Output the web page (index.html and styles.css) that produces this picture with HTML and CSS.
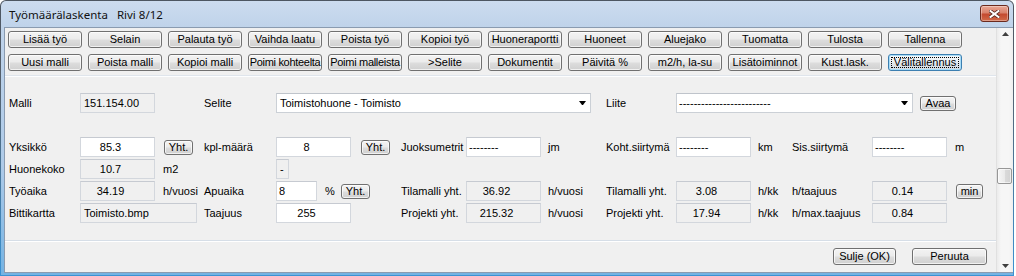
FILE: index.html
```html
<!DOCTYPE html>
<html lang="fi">
<head>
<meta charset="utf-8">
<title>Työmäärälaskenta</title>
<link rel="stylesheet" href="styles.css">
</head>
<body>
<div class="window">
  <div class="frame">
    <div class="titlebar">
      <span class="title">Työmäärälaskenta</span><span class="title rivi">Rivi 8/12</span>
      <button class="close" aria-label="Sulje">
        <svg width="11" height="8" viewBox="0 0 11 8"><path d="M1.5 1 L9.5 7 M9.5 1 L1.5 7" stroke="#5a2b22" stroke-width="3.6" stroke-linecap="square" fill="none"/><path d="M1.5 1 L9.5 7 M9.5 1 L1.5 7" stroke="#ffffff" stroke-width="2" stroke-linecap="square" fill="none"/></svg>
      </button>
    </div>
    <div class="client">
      <div class="main">
        <div class="toolbar">
          <div class="btnrow">
            <button class="btn">Lisää työ</button>
            <button class="btn">Selain</button>
            <button class="btn">Palauta työ</button>
            <button class="btn">Vaihda laatu</button>
            <button class="btn">Poista työ</button>
            <button class="btn">Kopioi työ</button>
            <button class="btn">Huoneraportti</button>
            <button class="btn">Huoneet</button>
            <button class="btn">Aluejako</button>
            <button class="btn">Tuomatta</button>
            <button class="btn">Tulosta</button>
            <button class="btn">Tallenna</button>
          </div>
          <div class="btnrow">
            <button class="btn">Uusi malli</button>
            <button class="btn">Poista malli</button>
            <button class="btn">Kopioi malli</button>
            <button class="btn tight">Poimi kohteelta</button>
            <button class="btn tight">Poimi malleista</button>
            <button class="btn">&gt;Selite</button>
            <button class="btn">Dokumentit</button>
            <button class="btn">Päivitä %</button>
            <button class="btn">m2/h, la-su</button>
            <button class="btn">Lisätoiminnot</button>
            <button class="btn">Kust.lask.</button>
            <button class="btn focus">Välitallennus</button>
          </div>
        </div>

        <div class="form">
          <span class="lbl c1">Malli</span>
          <span class="fld ro">151.154.00</span>
          <span class="lbl c4">Selite</span>
          <div class="combo selite"><span>Toimistohuone - Toimisto</span><i class="arrow"></i></div>
          <span class="lbl">Liite</span>
          <div class="cell liite-cell"><div class="combo liite"><span>-------------------------</span><i class="arrow"></i></div><button class="sbtn avaa">Avaa</button></div>

          <div class="blank"></div>

          <span class="lbl c1">Yksikkö</span>
          <span class="fld ctr">85.3</span>
          <button class="sbtn yht nudge">Yht.</button>
          <span class="lbl">kpl-määrä</span>
          <div class="cell"><span class="fld ctr">8</span><button class="sbtn yht after-fld">Yht.</button></div>
          <span class="lbl">Juoksumetrit</span>
          <span class="fld">--------</span>
          <span class="lbl">jm</span>
          <span class="lbl">Koht.siirtymä</span>
          <span class="fld">--------</span>
          <span class="lbl">km</span>
          <span class="lbl">Sis.siirtymä</span>
          <span class="fld">--------</span>
          <span class="lbl">m</span>

          <span class="lbl c1">Huonekoko</span>
          <span class="fld ro ctr">10.7</span>
          <span class="lbl">m2</span>
          <span class="fld ro mini c5">-</span>

          <span class="lbl c1">Työaika</span>
          <span class="fld ro ctr">34.19</span>
          <span class="lbl">h/vuosi</span>
          <span class="lbl">Apuaika</span>
          <div class="cell"><span class="fld short">8</span><span class="pct">%</span><button class="sbtn yht">Yht.</button></div>
          <span class="lbl">Tilamalli yht.</span>
          <span class="fld ro ctr">36.92</span>
          <span class="lbl">h/vuosi</span>
          <span class="lbl">Tilamalli yht.</span>
          <span class="fld ro ctr">3.08</span>
          <span class="lbl">h/kk</span>
          <span class="lbl">h/taajuus</span>
          <span class="fld ro ctr">0.14</span>
          <button class="sbtn minbtn nudge">min</button>

          <span class="lbl c1">Bittikartta</span>
          <span class="fld ro wide">Toimisto.bmp</span>
          <span class="lbl">Taajuus</span>
          <span class="fld ctr">255</span>
          <span class="lbl">Projekti yht.</span>
          <span class="fld ro ctr">215.32</span>
          <span class="lbl">h/vuosi</span>
          <span class="lbl">Projekti yht.</span>
          <span class="fld ro ctr">17.94</span>
          <span class="lbl">h/kk</span>
          <span class="lbl">h/max.taajuus</span>
          <span class="fld ro ctr">0.84</span>
        </div>

        <div class="footer">
          <button class="btn ok">Sulje (OK)</button>
          <button class="btn cancel">Peruuta</button>
        </div>
      </div>

      <div class="scrollbar">
        <div class="sb-arrow"><svg width="7" height="4" viewBox="0 0 7 4"><polygon points="0,4 7,4 3.5,0" fill="#3f3f3f"/></svg></div>
        <div class="sb-thumb"></div>
        <div class="sb-arrow down"><svg width="7" height="4" viewBox="0 0 7 4"><polygon points="0,0 7,0 3.5,4" fill="#3f3f3f"/></svg></div>
      </div>
    </div>
  </div>
</div>
</body>
</html>
```

FILE: styles.css
```css
* {
  box-sizing: border-box;
}

html, body {
  margin: 0;
  padding: 0;
}

body {
  width: 1016px;
  height: 276px;
  overflow: hidden;
  background: #ffffff;
  font-family: "Liberation Sans", Arial, sans-serif;
  font-size: 11px;
  color: #000;
}

.window {
  width: 1014px;
  height: 276px;
  padding: 1px;
  border-radius: 6px 6px 0 0;
  background: linear-gradient(to bottom, #4d5661 0, #56616d 30%, #3a93d4 100%);
}

.frame {
  height: 100%;
  display: flex;
  flex-direction: column;
  padding: 0 0 2px 3px;
  border-radius: 5px 5px 0 0;
  background: linear-gradient(to bottom, #ccdcef 0, #bfd3ea 26px, #aecbe9 60%, #74b3e3 100%);
}

/* ---------- title bar ---------- */
.titlebar {
  flex: none;
  height: 26px;
  display: flex;
  align-items: center;
  padding: 1px 0 0 5px;
}

.title {
  font-family: "Noto Sans", "Open Sans", sans-serif;
  font-size: 11.5px;
  color: #111;
  white-space: nowrap;
}

.rivi {
  margin-left: 9px;
}

.close {
  margin: 3px 4px 0 auto;
  align-self: flex-start;
  width: 29px;
  height: 17px;
  padding: 0;
  display: flex;
  align-items: center;
  justify-content: center;
  border: 1px solid #6b2a1e;
  border-radius: 3px;
  background: linear-gradient(to bottom, #e9a896 0%, #d9826c 45%, #c44a30 55%, #d16a48 100%);
  box-shadow: inset 0 0 0 1px rgba(255, 255, 255, 0.35);
}

/* ---------- client ---------- */
.client {
  flex: 1;
  min-height: 0;
  display: flex;
  background: #f0f0f0;
  border: 1px solid #8a9bb0;
  border-right: none;
}

.main {
  flex: 1;
  min-width: 0;
  display: flex;
  flex-direction: column;
}

.toolbar {
  flex: none;
  height: 48px;
  padding: 3px 0 0 3px;
  border-bottom: 1px solid #dfe5ec;
}

.btnrow {
  display: flex;
  gap: 6px;
}

.btnrow + .btnrow {
  margin-top: 6px;
}

.btn,
.sbtn {
  position: relative;
  padding: 0;
  display: flex;
  align-items: center;
  justify-content: center;
  font-family: "Liberation Sans", Arial, sans-serif;
  font-size: 11px;
  line-height: 1;
  color: #000;
  white-space: nowrap;
  border: 1px solid #707070;
  border-radius: 3px;
  background: linear-gradient(to bottom, #f3f3f3 0%, #ebebeb 48%, #dddddd 52%, #d0d0d0 100%);
  box-shadow: inset 0 0 0 1px rgba(255, 255, 255, 0.7);
}

.btn {
  flex: none;
  width: 74px;
  height: 17px;
}

.btn.tight {
  letter-spacing: -0.3px;
}

.btn.focus {
  border-color: #3c7fb1;
  background: linear-gradient(to bottom, #f4f8fb 0%, #ebf0f4 48%, #dfe5ea 52%, #d3dbe2 100%);
  box-shadow: inset 0 0 0 1px #a8dcf7;
}

.btn.focus::after {
  content: "";
  position: absolute;
  inset: 2px;
  border: 1px dotted #000;
}

/* ---------- form grid ---------- */
.form {
  flex: 1;
  border-top: 1px solid #fdfeff;
  padding: 15px 0 0 4px;
  display: grid;
  grid-template-columns: 71px 83px 41px 72px 125px 65px 82px 58px 70px 82px 34px 80px 83px 1fr;
  grid-template-rows: repeat(6, 22px);
  align-content: start;
  align-items: center;
}

.c1 { grid-column: 1; }
.c4 { grid-column: 4; }
.c5 { grid-column: 5; }

.blank {
  grid-column: 1 / -1;
  height: 22px;
}

.lbl {
  white-space: nowrap;
}

.cell {
  display: flex;
  align-items: center;
}

.liite-cell {
  grid-column: 10 / 15;
}

.fld {
  width: 75px;
  height: 20px;
  display: flex;
  align-items: center;
  padding: 0 2px;
  white-space: nowrap;
  overflow: hidden;
  background: #ffffff;
  border: 1px solid #d3d7dd;
  border-top-color: #c6cad1;
}

.fld.ro {
  background: #f0f0f0;
  padding-left: 3px;
}

.fld.ctr {
  justify-content: center;
  padding: 0 14px 0 0;
}

.fld.mini {
  width: 13px;
  padding-left: 3px;
}

.fld.short {
  width: 41px;
}

.fld.wide {
  grid-column: 2 / 4;
  width: 117px;
}

.pct {
  width: 16px;
  margin-left: 8px;
}

.sbtn {
  height: 15px;
}

.sbtn.yht {
  width: 29px;
}

.sbtn.nudge {
  margin-left: 1px;
}

.sbtn.after-fld {
  margin-left: 10px;
}

.sbtn.avaa {
  width: 36px;
  margin-left: 7px;
}

.sbtn.minbtn {
  width: 27px;
}

.combo {
  height: 20px;
  display: flex;
  align-items: center;
  padding: 0 4px 0 3px;
  white-space: nowrap;
  background: #ffffff;
  border: 1px solid #cbd0d6;
  border-top-color: #bfc4cb;
}

.combo.selite {
  grid-column: 5 / 9;
  width: 315px;
}

.combo.liite {
  width: 237px;
  padding-left: 2px;
}

.arrow {
  margin-left: auto;
  width: 7px;
  height: 4px;
  border-left: 3px solid transparent;
  border-right: 3px solid transparent;
  border-top: 4px solid #000;
  box-sizing: border-box;
}

/* ---------- footer ---------- */
.footer {
  flex: none;
  height: 32px;
  display: flex;
  justify-content: flex-end;
  gap: 16px;
  padding: 7px 9px 0 0;
  border-top: 1px solid #d6dee7;
  box-shadow: inset 0 1px 0 #ffffff;
}

.btn.ok {
  width: 63px;
}

.btn.cancel {
  width: 75px;
}

/* ---------- scrollbar ---------- */
.scrollbar {
  flex: none;
  width: 17px;
  display: flex;
  flex-direction: column;
  border-left: 1px solid #e0e0e0;
  background: linear-gradient(to right, #ebebeb 0, #f6f6f6 25%, #f6f6f6 75%, #eeeeee 100%);
}

.sb-arrow {
  height: 12px;
  display: flex;
  justify-content: center;
  align-items: flex-start;
  padding-top: 4px;
}

.sb-arrow svg {
  display: block;
}

.sb-arrow.down {
  margin-top: auto;
}

.sb-thumb {
  width: 15px;
  height: 16px;
  margin-top: 128px;
  border: 1px solid #979797;
  border-radius: 2px;
  background: linear-gradient(to right, #f6f6f6 0%, #eaeaea 50%, #dadada 55%, #d2d2d2 100%);
  box-shadow: inset 0 0 0 1px rgba(255, 255, 255, 0.6);
}
```
